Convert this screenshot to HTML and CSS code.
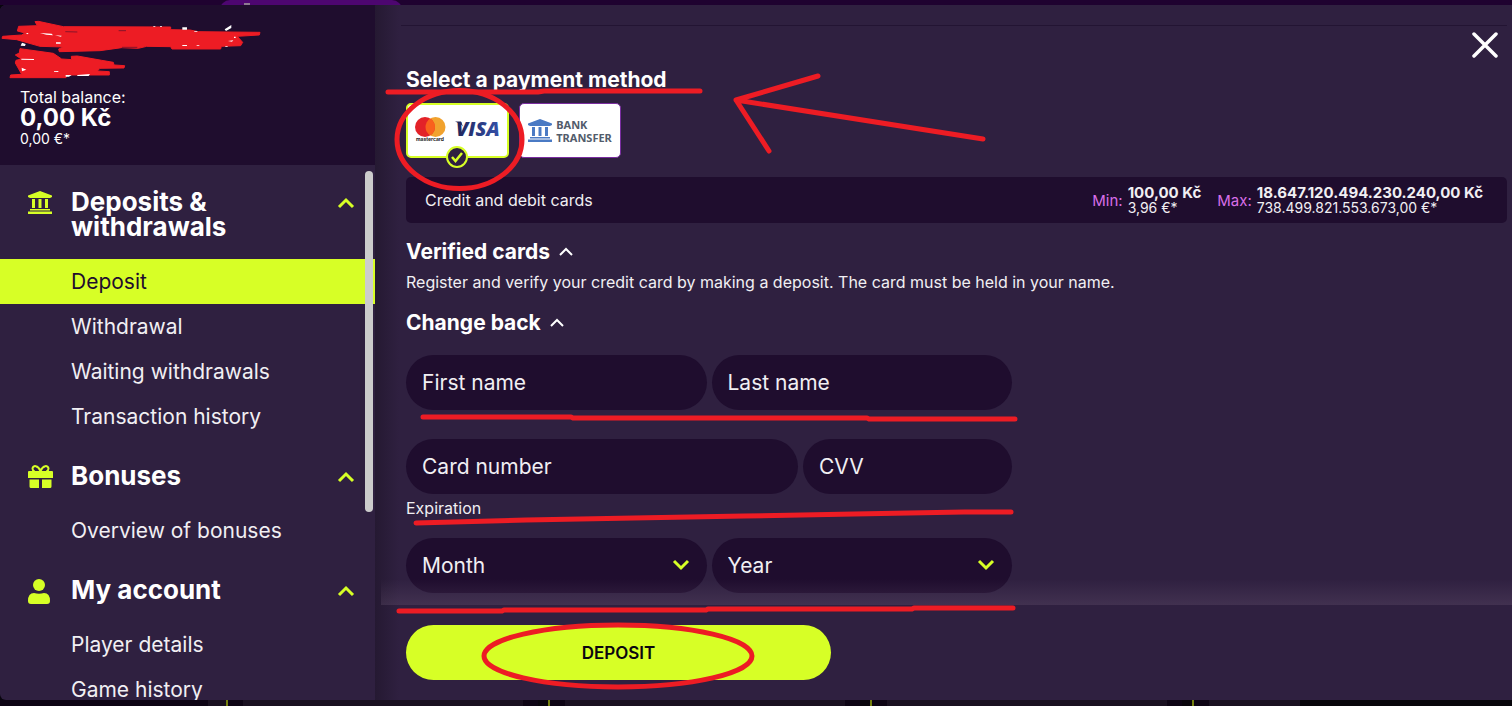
FILE: index.html
```html
<!DOCTYPE html>
<html lang="en">
<head>
<meta charset="utf-8">
<meta name="viewport" content="width=device-width, initial-scale=1">
<title>Deposit</title>
<link rel="stylesheet" href="styles.css">
</head>
<body>
<svg class="defs" width="0" height="0" aria-hidden="true">
  <symbol id="chevron" viewBox="0 0 18 12"><path d="M2 10 9 3l7 7" fill="none" stroke="currentColor" stroke-width="3"/></symbol>
  <symbol id="bank" viewBox="0 0 24 23"><path d="M0 6V4.500L12 0l12 4.500V6l-2 1H2zM4 8h3v9H4zm6.500 0h3v9h-3zM17 8h3v9h-3zM2 18h20v1.500H2zM0 20.500h24V23H0z" fill="currentColor"/></symbol>
</svg>
<div class="page">
  <div class="backdrop-top"><span class="backdrop-tab"></span></div>
  <div class="modal">
    <aside class="sidebar">
      <header class="account">
        <span>Total balance:</span>
        <strong>0,00 Kč</strong>
        <small>0,00 €*</small>
      </header>
      <nav class="menu">
        <button class="group" type="button">
          <svg class="group-icon" width="24" height="23"><use href="#bank"/></svg>
          <span class="group-name">Deposits &amp; withdrawals</span>
          <svg class="group-arrow" width="18" height="12"><use href="#chevron"/></svg>
        </button>
        <a class="item active" href="#">Deposit</a>
        <a class="item" href="#">Withdrawal</a>
        <a class="item" href="#">Waiting withdrawals</a>
        <a class="item" href="#">Transaction history</a>
        <button class="group" type="button">
          <svg class="group-icon" width="25" height="23" viewBox="0 0 25 23"><path d="M0 7q0-1 1-1h23q1 0 1 1v6H0zM1.500 14.500H11V23H3q-1.500 0-1.500-1.500zM14 14.500h9.500v7q0 1.500-1.500 1.500h-8z" fill="currentColor"/><path d="M12.500 6C10 0 5 0 4.500 3.500c0 1.500 1 2.500 2 3M12.500 6C15 0 20 0 20.500 3.500c0 1.500-1 2.500-2 3" fill="none" stroke="currentColor" stroke-width="2"/></svg>
          <span class="group-name">Bonuses</span>
          <svg class="group-arrow" width="18" height="12"><use href="#chevron"/></svg>
        </button>
        <a class="item" href="#">Overview of bonuses</a>
        <button class="group" type="button">
          <svg class="group-icon" width="22" height="25" viewBox="0 0 22 25"><circle cx="11" cy="6" r="6" fill="currentColor"/><path d="M0 22q0-8 6-8 5 1.500 10 0 6 0 6 8 0 3-3 3H3q-3 0-3-3z" fill="currentColor"/></svg>
          <span class="group-name">My account</span>
          <svg class="group-arrow" width="18" height="12"><use href="#chevron"/></svg>
        </button>
        <a class="item" href="#">Player details</a>
        <a class="item" href="#">Game history</a>
        <span class="thumb"></span>
      </nav>
    </aside>
    <main class="panel">
      <button class="close" type="button" aria-label="Close"><svg width="26" height="26" viewBox="0 0 26 26"><path d="m2 2 22 22M24 2 2 24" stroke="#fff" stroke-width="3.500" stroke-linecap="round"/></svg></button>
      <div class="content">
        <hr class="rule">
        <h2 class="heading">Select a payment method</h2>
        <div class="methods">
          <button class="method selected" type="button" aria-label="Mastercard and Visa">
            <svg width="86" height="28" viewBox="0 0 86 28">
              <defs><linearGradient id="visa"><stop offset="0" stop-color="#20245a"/><stop offset="1" stop-color="#3450a8"/></linearGradient></defs>
              <circle cx="20.500" cy="10" r="10" fill="#f1a22e"/><circle cx="10" cy="10" r="10" fill="#e32228"/>
              <path d="M15.250 1.500a10 10 0 0 1 0 17 10 10 0 0 1 0-17z" fill="#f9611d"/>
              <text x="1" y="24" class="mc-word">mastercard</text>
              <text x="41" y="19" class="visa-word" fill="url(#visa)">VISA</text>
              <path d="M40 4.500h6l2 5q-3-3.500-8-5z" fill="#20245a"/>
            </svg>
            <svg class="tick" width="22" height="22" viewBox="0 0 22 22"><circle cx="11" cy="11" r="10" fill="#2f2040" stroke="#d7ff26" stroke-width="2"/><path d="m6 11 3.500 4L16 7" fill="none" stroke="#d7ff26" stroke-width="2.500"/></svg>
          </button>
          <button class="method" type="button">
            <svg class="bank-blue" width="24" height="23"><use href="#bank"/></svg>
            <span class="bank-word">BANK<br>TRANSFER</span>
          </button>
        </div>
        <div class="limits">
          <span class="limits-name">Credit and debit cards</span>
          <span class="limits-label">Min:</span>
          <span class="limits-value"><strong>100,00 Kč</strong><span>3,96 €*</span></span>
          <span class="limits-label">Max:</span>
          <span class="limits-value"><strong>18.647.120.494.230.240,00 Kč</strong><span>738.499.821.553.673,00 €*</span></span>
        </div>
        <h2 class="heading verified">Verified cards <svg width="14" height="9" viewBox="0 0 14 9"><path d="m1 8 6-6 6 6" fill="none" stroke="#fff" stroke-width="2"/></svg></h2>
        <p class="note">Register and verify your credit card by making a deposit. The card must be held in your name.</p>
        <h2 class="heading change">Change back <svg width="14" height="9" viewBox="0 0 14 9"><path d="m1 8 6-6 6 6" fill="none" stroke="#fff" stroke-width="2"/></svg></h2>
        <form class="card-form" id="card-form">
          <div class="row halves">
            <input class="field" type="text" placeholder="First name" aria-label="First name">
            <input class="field" type="text" placeholder="Last name" aria-label="Last name">
          </div>
          <div class="row number">
            <input class="field" type="text" placeholder="Card number" aria-label="Card number">
            <input class="field" type="text" placeholder="CVV" aria-label="CVV">
          </div>
          <label class="expiration" for="month">Expiration</label>
          <div class="row halves">
            <div class="pick"><select class="field" id="month"><option>Month</option></select><svg class="pick-arrow" width="18" height="12"><use href="#chevron"/></svg></div>
            <div class="pick"><select class="field" id="year" aria-label="Expiration year"><option>Year</option></select><svg class="pick-arrow" width="18" height="12"><use href="#chevron"/></svg></div>
          </div>
        </form>
      </div>
      <footer class="actions"><button class="deposit" type="submit" form="card-form">DEPOSIT</button></footer>
    </main>
  </div>
  <div class="backdrop-bottom"></div>
  <svg class="marks" viewBox="0 0 1512 706" aria-hidden="true">
    <g transform="translate(0 15) scale(.3333)">
      <path fill="#ed1c24" stroke="#ed1c24" stroke-width="3" stroke-linejoin="round" d="M105 20l10-1 75 16 322 1v8l58 1 25 5 185 2-2 8-66 4 16 18-6 10-58 2-2 8H516l-4-7-72-1-25 6-50-2-65 9-122 3-2-8 14-6-70-2-70-20-44-4 2-6 57-4 10-6-23-6 4-14 56-2zM60 101l100 14 25 17 30 2-1-10 18-1 73 13 35 6 2 8 32 2-2 7-72 1-8 8 36 2v10H200l-2 8H30l2-8 33-2-19-34 2-8 16-4-18-12 12-6z"/>
      <path fill="#fff" d="M62 92l4-9 11 4-2 6zM78 54l8 0-4 4zM120 54l35 2 4 5-20-2zM165 61l20 1-2 3zM168 82h14v4h-14zM460 33h6v2h-6zM480 33h6v2h-6zM547 37h14v7h-14zM583 49h9v2h-9zM674 43l20-13v9l-16 9zM684 78l16-2-4 4zM702 65h5v4h-5zM547 90h14v3h-14zM590 91h8v2h-8zM676 93h7v2h-7zM64 131l38 1v3l-38-1zM65 158l14 6-13 5zM162 169l13-1v3l-13 0zM197 180h18l-8 5h-10zM232 180l38-3-4 6-34 0z"/>
      <path fill="none" stroke="#1f0d2e" stroke-width="1.500" d="M356 47h22M196 50l36 1M366 97h46"/>
    </g>
    <g class="red">
      <path d="M388 92h150l6-1h156M818 76l-82 24 33 51M736 100l247 39"/>
      <ellipse cx="459.500" cy="139.500" rx="62.500" ry="49"/>
      <path d="M423 417h148l2 1h294l2 1h146M416 523l110-3 108-2 110-2 110-2 110-2h47M399 611h103l2-1h202l2-1h204l2-1h99"/>
      <ellipse cx="618" cy="656" rx="134" ry="31"/>
    </g>
  </svg>
</div>
</body>
</html>
```
FILE: styles.css
```css
* { box-sizing: border-box; }
body { margin: 0; background: #09050e; color: #fff; font-family: Inter, "Open Sans", sans-serif; }
button, input, select { font: inherit; color: inherit; border: 0; padding: 0; background: none; }
h2, p { margin: 0; }
.defs { display: none; }
.page { position: relative; display: grid; grid-template-rows: 5px minmax(0, 1fr) 6px; height: 100vh; overflow: hidden; }
.backdrop-top { background: #1f0230; overflow: hidden; padding-left: 220px; }
.backdrop-tab { display: block; width: 182px; height: 20px; border-radius: 16px; background: linear-gradient(#8d7a92, #8d7a92) 24px 3px / 6px 2px no-repeat, #4d0670; }
.backdrop-bottom { background: linear-gradient(90deg, transparent 1300px, #07050a 1300px), linear-gradient(90deg, #0d0414 208px, transparent 208px), repeating-linear-gradient(90deg, #74800f 0 2px, #0d0414 2px 17px, #191020 17px 297px, #0d0414 297px 312px, #09050c 312px 322px) 226px 0; }
.modal { display: grid; grid-template-columns: 375px minmax(0, 1fr); min-height: 0; background: #2f2040; border-radius: 6px 0 0 6px; overflow: hidden; }

.sidebar { display: flex; flex-direction: column; min-height: 0; }
.account { display: flex; flex-direction: column; flex: none; padding: 83px 20px 17px; background: #1f0d2e; font-size: 16px; line-height: 18px; }
.account strong { font-size: 24px; line-height: 23px; }
.account small { font-size: 14px; line-height: 19px; }
.menu { position: relative; flex: 1; min-height: 0; overflow: hidden; }
.group { display: grid; grid-template-columns: 43px 1fr 18px; align-items: start; width: 100%; padding: 24px 20px 20px 28px; text-align: left; }
.group-icon, .group-arrow { color: #d7ff26; }
.group-icon { margin: 2px 0 -4px; }
.group-arrow { margin-top: 8px; }
.group-name { max-width: 220px; font-size: 26px; font-weight: 700; line-height: 25px; }
.item { display: block; padding-left: 71px; font-size: 21px; line-height: 45px; color: #f1eff3; text-decoration: none; }
.active { background: #d7ff26; color: #1f0d2e; }
.thumb { position: absolute; top: 6px; right: 2px; width: 8px; height: 341px; border-radius: 4px; background: #ccc; }

.panel { position: relative; display: flex; flex-direction: column; min-height: 0; background: linear-gradient(90deg, #251932, #2f2040 24px); }
.close { position: absolute; z-index: 1; top: 27px; right: 14px; width: 26px; height: 26px; }
.close svg, .tick, .method svg { display: block; }
.content { position: relative; flex: 1; min-height: 0; padding: 20px 5px 0 31px; overflow: hidden; }
.content::after { content: ""; position: absolute; left: 6px; right: 0; bottom: 0; height: 26px; background: linear-gradient(transparent, #8b749033); pointer-events: none; }
.rule { height: 1px; margin: 0 0 44px -5px; border: 0; background: #231433; }
.heading { font-size: 21px; font-weight: 700; line-height: 20px; }
.heading svg { margin-left: 4px; vertical-align: 3px; }
.methods { display: flex; gap: 10px; margin-top: 13px; }
.method { position: relative; display: flex; align-items: center; justify-content: center; gap: 4px; width: 102px; height: 55px; border: 1px solid #7a2da0; border-radius: 5px; background: #fff; }
.selected { width: 103px; border: 2px solid #d7ff26; }
.tick { position: absolute; left: 38px; bottom: -12px; }
.mc-word { font: 700 5px Inter, sans-serif; fill: #222; }
.visa-word { font: italic 800 20px "Open Sans", sans-serif; }
.bank-blue { color: #4a7ac4; }
.bank-word { font: 700 11px/13px "Noto Sans", sans-serif; color: #525c6b; text-align: left; }
.limits { display: flex; align-items: center; min-height: 46px; margin-top: 19px; padding: 0 24px 0 19px; border-radius: 5px; background: #1f0d2e; font-size: 16px; color: #f1eff3; }
.limits-name { flex: 1; }
.limits-label { font-size: 15px; color: #d86fe8; }
.limits-value { display: flex; flex-direction: column; margin-left: 5px; font-size: 14px; line-height: 15px; }
.limits-value strong { font-size: 15px; }
.limits-value + .limits-label { margin-left: 16px; }
.verified { margin-top: 19px; }
.note { margin-top: 10px; font-size: 16px; line-height: 20px; color: #f1eff3; }
.change { margin-top: 21px; }
.card-form { max-width: 606px; margin-top: 22px; }
.row { display: grid; gap: 5px; }
.halves { grid-template-columns: 1fr 1fr; }
.number { grid-template-columns: 392fr 209fr; margin-top: 29px; }
.field { width: 100%; height: 55px; padding: 0 16px; border-radius: 28px; background: #1f0d2e; font-size: 21px; color: #f1eff3; appearance: none; }
.field::placeholder { color: #f1eff3; opacity: 1; }
.expiration { display: block; margin: 4px 0 20px; font-size: 16px; line-height: 20px; color: #f1eff3; }
.pick { position: relative; }
.pick-arrow { position: absolute; right: 17px; top: 21px; color: #d7ff26; transform: rotate(180deg); pointer-events: none; }
.actions { flex: none; padding: 20px 31px; background: linear-gradient(90deg, #251932, #2f2040 24px); }
.deposit { display: block; width: 100%; max-width: 425px; height: 55px; border-radius: 28px; background: #d7ff26; color: #0b0610; font-size: 17px; font-weight: 600; }
.marks { position: absolute; z-index: 2; top: 0; left: 0; width: 100%; pointer-events: none; }
.red { fill: none; stroke: #ed1c24; stroke-width: 5; stroke-linecap: round; stroke-linejoin: round; }
```
